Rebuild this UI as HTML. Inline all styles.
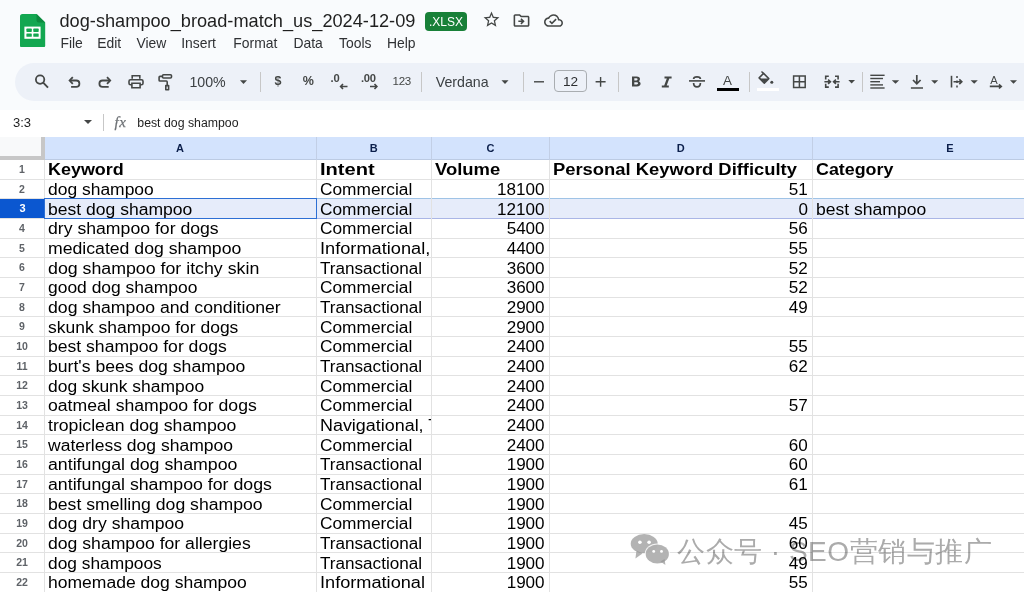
<!DOCTYPE html>
<html><head><meta charset="utf-8">
<style>
*{margin:0;padding:0;box-sizing:border-box}
html,body{width:1024px;height:592px;overflow:hidden;background:#f9fbfd;font-family:"Liberation Sans",sans-serif;position:relative}
.abs{position:absolute}
.title{position:absolute;left:59.5px;top:10.5px;font-size:18.2px;color:#1f1f1f;white-space:nowrap}
.badge{position:absolute;left:424.8px;top:12px;width:42.3px;height:19.3px;background:#188038;border-radius:4px;color:#fff;font-size:12px;line-height:20px;text-align:center}
.menu{position:absolute;top:35px;font-size:13.9px;color:#2f3134;white-space:nowrap}
.tb{position:absolute;left:15px;top:63.3px;width:1060px;height:37.5px;border-radius:19px;background:#edf1f8}
.ico{position:absolute;fill:#444746}
.sep{position:absolute;top:72px;width:1px;height:20px;background:#c7c7c7}
.tbt{position:absolute;font-size:14px;color:#444746;white-space:nowrap}
.dd{position:absolute;width:0;height:0;border-left:4px solid transparent;border-right:4px solid transparent;border-top:4px solid #444746}
.fbar{position:absolute;left:0;top:110px;width:1024px;height:27px;background:#fff}
.colhdr{position:absolute;left:44.5px;top:136.5px;width:1000px;height:23px;background:#d3e3fd;border-bottom:1px solid #bccbe3}
.ch{position:absolute;top:137px;height:22px;line-height:22px;font-size:11px;font-weight:bold;color:#0b1f4b;text-align:center}
.chl{position:absolute;top:136.5px;width:1px;height:23px;background:#c2cfe6}
.corner{position:absolute;left:0;top:136.5px;width:41px;height:19px;background:#f8f9fa}
.hthick{position:absolute;left:0;top:155.5px;width:45px;height:4.1px;background:#c7c7c7}
.vthick{position:absolute;left:41px;top:136.5px;width:3.8px;height:23.1px;background:#c7c7c7}
.grid{position:absolute;left:0;top:0;width:1024px;height:592px}
.gridbg{position:absolute;left:0;top:159.6px;width:1024px;height:440px;background:#fff}
.hl{position:absolute;left:0;width:1024px;height:1px;background:#e2e2e2}
.vl{position:absolute;top:159.6px;width:1px;height:440px;background:#e2e2e2}
.rhl{position:absolute;left:41px;top:159.6px;width:3px;height:440px;background:#c7c7c7}
.rh{position:absolute;left:1.5px;width:41px;text-align:center;font-size:10.5px;font-weight:bold;color:#5f6368}
.rh.sel{left:0;width:43.5px;padding-left:1.5px;background:#0b57d0;color:#fff;font-weight:bold;font-size:11px}
.selrow{position:absolute;left:44px;width:1000px;background:#e6ecfa;border-top:1px solid #9fc3e6;border-bottom:1px solid #aab6e6}
.cell{position:absolute;height:20px;line-height:20px;font-size:16px;color:#000;white-space:nowrap}
.cell span{display:inline-block;transform:scaleX(1.104);transform-origin:0 50%}
.cell.num span{transform-origin:100% 50%}
.cell.b span{font-weight:bold;transform:scaleX(1.145)}
.active{position:absolute;left:44.3px;top:198.3px;width:272.7px;height:20.5px;border:1.8px solid #2d6fd4}
.wm{position:absolute;left:677px;top:532.5px;font-size:28px;color:#ababab;white-space:nowrap;letter-spacing:0.5px;mix-blend-mode:multiply}
</style></head><body>
<!-- sheets logo -->
<svg class="abs" style="left:20.4px;top:13.7px" width="25.2" height="33.8" viewBox="0 0 25.2 33.8">
 <path d="M2.5 0 H16.6 L25.2 8.6 V31.3 Q25.2 33.8 22.7 33.8 H2.5 Q0 33.8 0 31.3 V2.5 Q0 0 2.5 0Z" fill="#13a751"/>
 <path d="M16.6 0 L25.2 8.6 H18.6 Q16.6 8.6 16.6 6.6Z" fill="#0c8a3f"/>
 <rect x="4.4" y="12.6" width="16.2" height="12.2" fill="#fff"/>
 <rect x="6.4" y="14.6" width="5.4" height="3.3" rx="0.6" fill="#13a751"/>
 <rect x="13.3" y="14.6" width="5.4" height="3.3" rx="0.6" fill="#13a751"/>
 <rect x="6.4" y="19.5" width="5.4" height="3.3" rx="0.6" fill="#13a751"/>
 <rect x="13.3" y="19.5" width="5.4" height="3.3" rx="0.6" fill="#13a751"/>
</svg>
<div class="title">dog-shampoo_broad-match_us_2024-12-09</div>
<div class="badge">.XLSX</div>
<!-- star -->
<svg class="ico" style="left:481.5px;top:10.3px" width="19" height="19" viewBox="0 0 24 24"><path d="M22 9.24l-7.19-.62L12 2 9.19 8.63 2 9.24l5.46 4.73L5.82 21 12 17.27 18.18 21l-1.63-7.03L22 9.24zM12 15.4l-3.76 2.27 1-4.28-3.32-2.88 4.38-.38L12 6.1l1.71 4.04 4.38.38-3.32 2.88 1 4.28L12 15.4z"/></svg>
<!-- folder move -->
<svg class="ico" style="left:511.8px;top:10.5px" width="19" height="19" viewBox="0 0 24 24"><path d="M20 6h-8l-2-2H4c-1.1 0-2 .9-2 2v12c0 1.1.9 2 2 2h16c1.1 0 2-.9 2-2V8c0-1.1-.9-2-2-2zm0 12H4V6h5.17l2 2H20v10zm-7.84-6H8v2h4.16l-1.59 1.59L11.99 17 16 13.01 11.99 9l-1.41 1.41L12.16 12z"/></svg>
<!-- cloud done -->
<svg class="ico" style="left:544.2px;top:10.5px" width="19" height="19" viewBox="0 0 24 24"><path d="M19.35 10.04C18.67 6.59 15.64 4 12 4 9.11 4 6.6 5.64 5.35 8.04 2.34 8.36 0 10.91 0 14c0 3.31 2.690 6 6 6h13c2.76 0 5-2.24 5-5 0-2.64-2.05-4.78-4.650-4.96zM19 18H6c-2.21 0-4-1.79-4-4 0-2.05 1.53-3.76 3.56-3.97l1.07-.11.5-.95C8.08 7.14 9.94 6 12 6c2.620 0 4.88 1.86 5.39 4.43l.3 1.5 1.53.11c1.56.1 2.78 1.41 2.78 2.96 0 1.65-1.35 3-3 3zm-9-3.82l-2.09-2.09L6.5 13.5 10 17l6.01-6.01-1.41-1.41z"/></svg>

<div class="menu" style="left:60.4px">File</div>
<div class="menu" style="left:97.3px">Edit</div>
<div class="menu" style="left:136.4px">View</div>
<div class="menu" style="left:181.2px">Insert</div>
<div class="menu" style="left:233.3px">Format</div>
<div class="menu" style="left:293.5px">Data</div>
<div class="menu" style="left:339px">Tools</div>
<div class="menu" style="left:387px">Help</div>

<!-- toolbar -->
<div class="tb"></div>
<div class="tbt" style="left:189.4px;top:74.2px;font-size:14.2px;color:#3c4043">100%</div>
<div class="sep" style="left:259.5px"></div>
<div class="tbt" style="left:274.5px;top:73.5px;font-size:12.5px;font-weight:bold">$</div>
<div class="tbt" style="left:302.8px;top:73.5px;font-size:12.5px;font-weight:bold">%</div>
<div class="tbt" style="left:330.5px;top:71.8px;font-size:11.2px;font-weight:bold;letter-spacing:-0.2px">.0</div>
<div class="tbt" style="left:361px;top:71.8px;font-size:11.2px;font-weight:bold;letter-spacing:-0.3px">.00</div>
<div class="tbt" style="left:392.5px;top:74px;font-size:11.6px;letter-spacing:-0.3px">123</div>
<div class="sep" style="left:421.0px"></div>
<div class="tbt" style="left:435.8px;top:74.2px;font-size:14.2px;color:#3c4043">Verdana</div>
<div class="sep" style="left:523.0px"></div>
<div class="abs" style="left:554px;top:69.9px;width:33px;height:22.6px;border:1px solid #a9adb1;border-radius:4px;font-size:13.6px;line-height:21px;text-align:center;color:#2d2f31">12</div>
<div class="sep" style="left:617.5px"></div>
<div class="tbt" style="left:723px;top:72.6px;font-size:13.4px">A</div>
<div class="abs" style="left:717.2px;top:87.6px;width:22.3px;height:3.5px;background:#000"></div>
<div class="sep" style="left:748.5px"></div>
<div class="abs" style="left:756.7px;top:87.9px;width:22.5px;height:2.7px;background:#fff"></div>
<div class="sep" style="left:861.5px"></div>
<div class="tbt" style="left:990.3px;top:74.3px;font-size:11.2px">A</div>
<svg class="abs" style="left:0;top:0" width="1024" height="592" viewBox="0 0 1024 592"><circle cx="40.1" cy="79.6" r="4.2" fill="none" stroke="#444746" stroke-width="1.8"/><path d="M43.2 82.7 L48 87.6" fill="none" stroke="#444746" stroke-width="1.9" /><path d="M72.8 77.1 L69.6 80.5 L72.8 83.9" fill="none" stroke="#444746" stroke-width="1.8" /><path d="M70 80.5 H76.2 A3.2 3.2 0 0 1 76.2 86.9 H71.1" fill="none" stroke="#444746" stroke-width="1.8" /><path d="M107 77.1 L110.2 80.5 L107 83.9" fill="none" stroke="#444746" stroke-width="1.8" /><path d="M109.8 80.5 H102.6 A3.2 3.2 0 0 0 102.6 86.9 H108.7" fill="none" stroke="#444746" stroke-width="1.8" /><path d="M132.2 78.8 V75.8 H139.8 V78.8" fill="none" stroke="#444746" stroke-width="1.6" /><path d="M132 84.8 H130.5 Q129 84.8 129 83.3 V81.3 Q129 79.8 130.5 79.8 H141.5 Q143 79.8 143 81.3 V83.3 Q143 84.8 141.5 84.8 H140" fill="none" stroke="#444746" stroke-width="1.6" /><path d="M131.9 83.2 H140.1 V87.7 H131.9Z" fill="none" stroke="#444746" stroke-width="1.6" /><path d="M163.5 74.8 H170.5 Q171.5 74.8 171.5 75.8 V77 Q171.5 78 170.5 78 H163.5 Q162.5 78 162.5 77 V75.8 Q162.5 74.8 163.5 74.8Z" fill="none" stroke="#444746" stroke-width="1.6" /><path d="M162.5 76.4 H160 Q159.1 76.4 159.1 77.3 V80.2 Q159.1 81 160 81 H166.3 Q167.2 81 167.2 81.9 V85.5" fill="none" stroke="#444746" stroke-width="1.6" /><path d="M165.8 85.6 H168.6 V89.8 H165.8Z" fill="none" stroke="#444746" stroke-width="1.6" stroke-linejoin="round"/><path d="M240 80.2 H247 L243.5 84Z" fill="#444746"/><path d="M347.5 86.5 H341 M343 84 L340.6 86.5 L343 89" fill="none" stroke="#444746" stroke-width="1.6" /><path d="M370 86.5 H376.5 M374.5 84 L376.9 86.5 L374.5 89" fill="none" stroke="#444746" stroke-width="1.6" /><path d="M501.5 80.2 H508.5 L505.0 84Z" fill="#444746"/><path d="M534 81.8 H544" fill="none" stroke="#444746" stroke-width="1.4" /><path d="M595.6 81.8 H605.6 M600.6 76.9 V86.7" fill="none" stroke="#444746" stroke-width="1.4" /><path d="M632 76.4 H636.6 Q640 76.4 640 79.1 Q640 80.6 638.8 81.2 Q640.6 81.9 640.6 83.6 Q640.6 86.4 637 86.4 H632Z M634.3 78.3 V80.4 H636.4 Q637.6 80.4 637.6 79.35 Q637.6 78.3 636.4 78.3Z M634.3 82.2 V84.5 H636.7 Q638.1 84.5 638.1 83.35 Q638.1 82.2 636.7 82.2Z" fill="#444746"/><path d="M664.5 76.4 H671.6 V78.4 H669.3 L666.7 85.6 H668.8 V87.6 H661.8 V85.6 H664.2 L666.8 78.4 H664.5Z" fill="#444746"/><path d="M689 80.9 H705" fill="none" stroke="#444746" stroke-width="1.6" /><path d="M693.6 79 Q693.6 76.8 697 76.8 Q700.4 76.8 700.4 79" fill="none" stroke="#444746" stroke-width="1.7" /><path d="M693.6 83 Q693.6 86.9 697 86.9 Q700.4 86.9 700.4 83" fill="none" stroke="#444746" stroke-width="1.7" /><path d="M761.5 71.5 L763.8 73.8" fill="none" stroke="#444746" stroke-width="1.5" /><path d="M763.6 73.4 L768.8 78.6 L764.3 83.1 L759.1 77.9Z" fill="none" stroke="#444746" stroke-width="1.5" stroke-linejoin="round"/><path d="M759.6 78.4 H768.3 L764.3 82.4Z" fill="#444746"/><circle cx="771.8" cy="82.2" r="1.5" fill="#444746"/><path d="M793.6 75.9 H805.2 V87.5 H793.6Z M799.4 75.9 V87.5 M793.6 81.7 H805.2" fill="none" stroke="#444746" stroke-width="1.5" /><path d="M828.8 76.3 H825.7 V79.6 M825.7 83.8 V87.1 H828.8 M835 76.3 H838.1 V79.6 M838.1 83.8 V87.1 H835" fill="none" stroke="#444746" stroke-width="1.6" /><path d="M824.4 81.7 H830 M828.1 79.6 L830.4 81.7 L828.1 83.8" fill="none" stroke="#444746" stroke-width="1.6" /><path d="M839.6 81.7 H834 M835.9 79.6 L833.6 81.7 L835.9 83.8" fill="none" stroke="#444746" stroke-width="1.6" /><path d="M848.3 80.1 H855 L851.65 83.4Z" fill="#444746"/><path d="M870.3 75.3 H884.6" fill="none" stroke="#444746" stroke-width="1.4" /><path d="M870.3 78.5 H883" fill="none" stroke="#444746" stroke-width="1.4" /><path d="M870.3 81.7 H880" fill="none" stroke="#444746" stroke-width="1.4" /><path d="M870.3 84.9 H883" fill="none" stroke="#444746" stroke-width="1.4" /><path d="M870.3 88 H884.6" fill="none" stroke="#444746" stroke-width="1.4" /><path d="M891.8 80.3 H899.2 L895.5 83.8Z" fill="#444746"/><path d="M916.8 75 V83.2 M913 80 L916.8 83.8 L920.6 80" fill="none" stroke="#444746" stroke-width="1.7" /><path d="M910.9 88 H923" fill="none" stroke="#444746" stroke-width="1.5" /><path d="M931.2 80.3 H938.2 L934.7 83.8Z" fill="#444746"/><path d="M951.5 75.8 V87.5" fill="none" stroke="#444746" stroke-width="1.6" /><path d="M957 76 V78 M957 80.6 V83 M957 85.4 V87.4" fill="none" stroke="#444746" stroke-width="1.5" /><path d="M953.5 81.75 H961.5 M959.3 79.4 L961.8 81.75 L959.3 84.1" fill="none" stroke="#444746" stroke-width="1.6" /><path d="M970.6 80.3 H977.8 L974.2 83.8Z" fill="#444746"/><path d="M989.8 86.4 H1001 M999 84.3 L1001.3 86.4 L999 88.5" fill="none" stroke="#444746" stroke-width="1.6" /><path d="M1010 80.3 H1017 L1013.5 83.8Z" fill="#444746"/></svg>

<!-- formula bar -->
<div class="fbar"></div>
<div class="abs" style="left:13px;top:115px;font-size:13px;color:#1f1f1f">3:3</div>
<div class="dd" style="left:83.5px;top:120px"></div>
<div class="abs" style="left:103px;top:114px;width:1px;height:17px;background:#c7c7c7"></div>
<div class="abs" style="left:114.5px;top:113.5px;font-size:15px;font-style:italic;font-family:'Liberation Serif',serif;color:#6d7175;letter-spacing:0.6px;-webkit-text-stroke:0.25px #6d7175">fx</div>
<div class="abs" style="left:137.3px;top:115.8px;font-size:12.3px;color:#1f1f1f">best dog shampoo</div>

<!-- column header -->
<div class="corner"></div>
<div class="colhdr"></div>
<div class="ch" style="left:44px;width:272px">A</div>
<div class="ch" style="left:316px;width:115.5px">B</div>
<div class="ch" style="left:431.5px;width:118px">C</div>
<div class="ch" style="left:549.5px;width:262.5px">D</div>
<div class="ch" style="left:812px;width:276px">E</div>
<div class="chl" style="left:315.5px"></div>
<div class="chl" style="left:431px"></div>
<div class="chl" style="left:549px"></div>
<div class="chl" style="left:811.5px"></div>
<div class="hthick"></div>
<div class="vthick"></div>

<div class="gridbg"></div>
<div class="vl" style="left:43.5px"></div>
<div class="hl" style="top:178.70px"></div>
<div class="hl" style="top:198.37px"></div>
<div class="hl" style="top:218.04px"></div>
<div class="hl" style="top:237.71px"></div>
<div class="hl" style="top:257.38px"></div>
<div class="hl" style="top:277.05px"></div>
<div class="hl" style="top:296.72px"></div>
<div class="hl" style="top:316.39px"></div>
<div class="hl" style="top:336.06px"></div>
<div class="hl" style="top:355.73px"></div>
<div class="hl" style="top:375.40px"></div>
<div class="hl" style="top:395.07px"></div>
<div class="hl" style="top:414.74px"></div>
<div class="hl" style="top:434.41px"></div>
<div class="hl" style="top:454.08px"></div>
<div class="hl" style="top:473.75px"></div>
<div class="hl" style="top:493.42px"></div>
<div class="hl" style="top:513.09px"></div>
<div class="hl" style="top:532.76px"></div>
<div class="hl" style="top:552.43px"></div>
<div class="hl" style="top:572.10px"></div>
<div class="hl" style="top:591.77px"></div>
<div class="selrow" style="top:198.37px;height:20.67px"></div>
<div class="vl" style="left:315.50px"></div>
<div class="vl" style="left:431.00px"></div>
<div class="vl" style="left:549.00px"></div>
<div class="vl" style="left:811.50px"></div>
<div class="rh" style="top:159.90px;height:18.80px;line-height:18.80px">1</div>
<div class="rh" style="top:179.70px;height:18.67px;line-height:18.67px">2</div>
<div class="rh sel" style="top:199.47px;height:18.47px;line-height:18.47px">3</div>
<div class="rh" style="top:219.04px;height:18.67px;line-height:18.67px">4</div>
<div class="rh" style="top:238.71px;height:18.67px;line-height:18.67px">5</div>
<div class="rh" style="top:258.38px;height:18.67px;line-height:18.67px">6</div>
<div class="rh" style="top:278.05px;height:18.67px;line-height:18.67px">7</div>
<div class="rh" style="top:297.72px;height:18.67px;line-height:18.67px">8</div>
<div class="rh" style="top:317.39px;height:18.67px;line-height:18.67px">9</div>
<div class="rh" style="top:337.06px;height:18.67px;line-height:18.67px">10</div>
<div class="rh" style="top:356.73px;height:18.67px;line-height:18.67px">11</div>
<div class="rh" style="top:376.40px;height:18.67px;line-height:18.67px">12</div>
<div class="rh" style="top:396.07px;height:18.67px;line-height:18.67px">13</div>
<div class="rh" style="top:415.74px;height:18.67px;line-height:18.67px">14</div>
<div class="rh" style="top:435.41px;height:18.67px;line-height:18.67px">15</div>
<div class="rh" style="top:455.08px;height:18.67px;line-height:18.67px">16</div>
<div class="rh" style="top:474.75px;height:18.67px;line-height:18.67px">17</div>
<div class="rh" style="top:494.42px;height:18.67px;line-height:18.67px">18</div>
<div class="rh" style="top:514.09px;height:18.67px;line-height:18.67px">19</div>
<div class="rh" style="top:533.76px;height:18.67px;line-height:18.67px">20</div>
<div class="rh" style="top:553.43px;height:18.67px;line-height:18.67px">21</div>
<div class="rh" style="top:573.10px;height:18.67px;line-height:18.67px">22</div>
<div class="cell b" style="top:160.00px;left:47.60px"><span style="transform:scaleX(1.121)">Keyword</span></div>
<div class="cell b" style="top:160.00px;left:319.60px;width:111.40px;overflow:hidden"><span style="transform:scaleX(1.257)">Intent</span></div>
<div class="cell b" style="top:160.00px;left:435.10px"><span style="transform:scaleX(1.151)">Volume</span></div>
<div class="cell b" style="top:160.00px;left:553.10px"><span style="transform:scaleX(1.148)">Personal Keyword Difficulty</span></div>
<div class="cell b" style="top:160.00px;left:815.60px"><span style="transform:scaleX(1.116)">Category</span></div>
<div class="cell" style="top:180.07px;left:47.60px"><span style="transform:scaleX(1.091)">dog shampoo</span></div>
<div class="cell" style="top:180.07px;left:319.60px;width:111.40px;overflow:hidden"><span style="transform:scaleX(1.081)">Commercial</span></div>
<div class="cell num" style="top:180.07px;right:479.10px"><span style="transform:scaleX(1.066)">18100</span></div>
<div class="cell num" style="top:180.07px;right:216.60px"><span style="transform:scaleX(1.066)">51</span></div>
<div class="cell" style="top:199.74px;left:47.60px"><span style="transform:scaleX(1.096)">best dog shampoo</span></div>
<div class="cell" style="top:199.74px;left:319.60px;width:111.40px;overflow:hidden"><span style="transform:scaleX(1.081)">Commercial</span></div>
<div class="cell num" style="top:199.74px;right:479.10px"><span style="transform:scaleX(1.066)">12100</span></div>
<div class="cell num" style="top:199.74px;right:216.60px"><span style="transform:scaleX(1.066)">0</span></div>
<div class="cell" style="top:199.74px;left:815.60px"><span style="transform:scaleX(1.096)">best shampoo</span></div>
<div class="cell" style="top:219.41px;left:47.60px"><span style="transform:scaleX(1.103)">dry shampoo for dogs</span></div>
<div class="cell" style="top:219.41px;left:319.60px;width:111.40px;overflow:hidden"><span style="transform:scaleX(1.081)">Commercial</span></div>
<div class="cell num" style="top:219.41px;right:479.10px"><span style="transform:scaleX(1.066)">5400</span></div>
<div class="cell num" style="top:219.41px;right:216.60px"><span style="transform:scaleX(1.066)">56</span></div>
<div class="cell" style="top:239.08px;left:47.60px"><span style="transform:scaleX(1.103)">medicated dog shampoo</span></div>
<div class="cell" style="top:239.08px;left:319.60px;width:111.40px;overflow:hidden"><span style="transform:scaleX(1.138)">Informational,</span></div>
<div class="cell num" style="top:239.08px;right:479.10px"><span style="transform:scaleX(1.066)">4400</span></div>
<div class="cell num" style="top:239.08px;right:216.60px"><span style="transform:scaleX(1.066)">55</span></div>
<div class="cell" style="top:258.75px;left:47.60px"><span style="transform:scaleX(1.110)">dog shampoo for itchy skin</span></div>
<div class="cell" style="top:258.75px;left:319.60px;width:111.40px;overflow:hidden"><span style="transform:scaleX(1.069)">Transactional</span></div>
<div class="cell num" style="top:258.75px;right:479.10px"><span style="transform:scaleX(1.066)">3600</span></div>
<div class="cell num" style="top:258.75px;right:216.60px"><span style="transform:scaleX(1.066)">52</span></div>
<div class="cell" style="top:278.42px;left:47.60px"><span style="transform:scaleX(1.090)">good dog shampoo</span></div>
<div class="cell" style="top:278.42px;left:319.60px;width:111.40px;overflow:hidden"><span style="transform:scaleX(1.081)">Commercial</span></div>
<div class="cell num" style="top:278.42px;right:479.10px"><span style="transform:scaleX(1.066)">3600</span></div>
<div class="cell num" style="top:278.42px;right:216.60px"><span style="transform:scaleX(1.066)">52</span></div>
<div class="cell" style="top:298.09px;left:47.60px"><span style="transform:scaleX(1.104)">dog shampoo and conditioner</span></div>
<div class="cell" style="top:298.09px;left:319.60px;width:111.40px;overflow:hidden"><span style="transform:scaleX(1.069)">Transactional</span></div>
<div class="cell num" style="top:298.09px;right:479.10px"><span style="transform:scaleX(1.066)">2900</span></div>
<div class="cell num" style="top:298.09px;right:216.60px"><span style="transform:scaleX(1.066)">49</span></div>
<div class="cell" style="top:317.76px;left:47.60px"><span style="transform:scaleX(1.092)">skunk shampoo for dogs</span></div>
<div class="cell" style="top:317.76px;left:319.60px;width:111.40px;overflow:hidden"><span style="transform:scaleX(1.081)">Commercial</span></div>
<div class="cell num" style="top:317.76px;right:479.10px"><span style="transform:scaleX(1.066)">2900</span></div>
<div class="cell" style="top:337.43px;left:47.60px"><span style="transform:scaleX(1.098)">best shampoo for dogs</span></div>
<div class="cell" style="top:337.43px;left:319.60px;width:111.40px;overflow:hidden"><span style="transform:scaleX(1.081)">Commercial</span></div>
<div class="cell num" style="top:337.43px;right:479.10px"><span style="transform:scaleX(1.066)">2400</span></div>
<div class="cell num" style="top:337.43px;right:216.60px"><span style="transform:scaleX(1.066)">55</span></div>
<div class="cell" style="top:357.10px;left:47.60px"><span style="transform:scaleX(1.101)">burt's bees dog shampoo</span></div>
<div class="cell" style="top:357.10px;left:319.60px;width:111.40px;overflow:hidden"><span style="transform:scaleX(1.069)">Transactional</span></div>
<div class="cell num" style="top:357.10px;right:479.10px"><span style="transform:scaleX(1.066)">2400</span></div>
<div class="cell num" style="top:357.10px;right:216.60px"><span style="transform:scaleX(1.066)">62</span></div>
<div class="cell" style="top:376.77px;left:47.60px"><span style="transform:scaleX(1.090)">dog skunk shampoo</span></div>
<div class="cell" style="top:376.77px;left:319.60px;width:111.40px;overflow:hidden"><span style="transform:scaleX(1.081)">Commercial</span></div>
<div class="cell num" style="top:376.77px;right:479.10px"><span style="transform:scaleX(1.066)">2400</span></div>
<div class="cell" style="top:396.44px;left:47.60px"><span style="transform:scaleX(1.102)">oatmeal shampoo for dogs</span></div>
<div class="cell" style="top:396.44px;left:319.60px;width:111.40px;overflow:hidden"><span style="transform:scaleX(1.081)">Commercial</span></div>
<div class="cell num" style="top:396.44px;right:479.10px"><span style="transform:scaleX(1.066)">2400</span></div>
<div class="cell num" style="top:396.44px;right:216.60px"><span style="transform:scaleX(1.066)">57</span></div>
<div class="cell" style="top:416.11px;left:47.60px"><span style="transform:scaleX(1.103)">tropiclean dog shampoo</span></div>
<div class="cell" style="top:416.11px;left:319.60px;width:111.40px;overflow:hidden"><span style="transform:scaleX(1.120)">Navigational, T</span></div>
<div class="cell num" style="top:416.11px;right:479.10px"><span style="transform:scaleX(1.066)">2400</span></div>
<div class="cell" style="top:435.78px;left:47.60px"><span style="transform:scaleX(1.095)">waterless dog shampoo</span></div>
<div class="cell" style="top:435.78px;left:319.60px;width:111.40px;overflow:hidden"><span style="transform:scaleX(1.081)">Commercial</span></div>
<div class="cell num" style="top:435.78px;right:479.10px"><span style="transform:scaleX(1.066)">2400</span></div>
<div class="cell num" style="top:435.78px;right:216.60px"><span style="transform:scaleX(1.066)">60</span></div>
<div class="cell" style="top:455.45px;left:47.60px"><span style="transform:scaleX(1.109)">antifungal dog shampoo</span></div>
<div class="cell" style="top:455.45px;left:319.60px;width:111.40px;overflow:hidden"><span style="transform:scaleX(1.069)">Transactional</span></div>
<div class="cell num" style="top:455.45px;right:479.10px"><span style="transform:scaleX(1.066)">1900</span></div>
<div class="cell num" style="top:455.45px;right:216.60px"><span style="transform:scaleX(1.066)">60</span></div>
<div class="cell" style="top:475.12px;left:47.60px"><span style="transform:scaleX(1.109)">antifungal shampoo for dogs</span></div>
<div class="cell" style="top:475.12px;left:319.60px;width:111.40px;overflow:hidden"><span style="transform:scaleX(1.069)">Transactional</span></div>
<div class="cell num" style="top:475.12px;right:479.10px"><span style="transform:scaleX(1.066)">1900</span></div>
<div class="cell num" style="top:475.12px;right:216.60px"><span style="transform:scaleX(1.066)">61</span></div>
<div class="cell" style="top:494.79px;left:47.60px"><span style="transform:scaleX(1.102)">best smelling dog shampoo</span></div>
<div class="cell" style="top:494.79px;left:319.60px;width:111.40px;overflow:hidden"><span style="transform:scaleX(1.081)">Commercial</span></div>
<div class="cell num" style="top:494.79px;right:479.10px"><span style="transform:scaleX(1.066)">1900</span></div>
<div class="cell" style="top:514.46px;left:47.60px"><span style="transform:scaleX(1.101)">dog dry shampoo</span></div>
<div class="cell" style="top:514.46px;left:319.60px;width:111.40px;overflow:hidden"><span style="transform:scaleX(1.081)">Commercial</span></div>
<div class="cell num" style="top:514.46px;right:479.10px"><span style="transform:scaleX(1.066)">1900</span></div>
<div class="cell num" style="top:514.46px;right:216.60px"><span style="transform:scaleX(1.066)">45</span></div>
<div class="cell" style="top:534.13px;left:47.60px"><span style="transform:scaleX(1.101)">dog shampoo for allergies</span></div>
<div class="cell" style="top:534.13px;left:319.60px;width:111.40px;overflow:hidden"><span style="transform:scaleX(1.069)">Transactional</span></div>
<div class="cell num" style="top:534.13px;right:479.10px"><span style="transform:scaleX(1.066)">1900</span></div>
<div class="cell num" style="top:534.13px;right:216.60px"><span style="transform:scaleX(1.066)">60</span></div>
<div class="cell" style="top:553.80px;left:47.60px"><span style="transform:scaleX(1.084)">dog shampoos</span></div>
<div class="cell" style="top:553.80px;left:319.60px;width:111.40px;overflow:hidden"><span style="transform:scaleX(1.069)">Transactional</span></div>
<div class="cell num" style="top:553.80px;right:479.10px"><span style="transform:scaleX(1.066)">1900</span></div>
<div class="cell num" style="top:553.80px;right:216.60px"><span style="transform:scaleX(1.066)">49</span></div>
<div class="cell" style="top:573.47px;left:47.60px"><span style="transform:scaleX(1.096)">homemade dog shampoo</span></div>
<div class="cell" style="top:573.47px;left:319.60px;width:111.40px;overflow:hidden"><span style="transform:scaleX(1.135)">Informational</span></div>
<div class="cell num" style="top:573.47px;right:479.10px"><span style="transform:scaleX(1.066)">1900</span></div>
<div class="cell num" style="top:573.47px;right:216.60px"><span style="transform:scaleX(1.066)">55</span></div>
<div class="active"></div>

<!-- watermark -->
<svg class="abs" style="left:625px;top:528px" width="50" height="42" viewBox="0 0 50 42">
 <g fill="rgba(150,150,150,0.72)">
 <ellipse cx="19.2" cy="15.7" rx="13.5" ry="9.6"/>
 <path d="M11.5 22.5 L10.4 30.5 L17.5 25.5Z"/>
 </g>
 <ellipse cx="32.3" cy="26" rx="12.6" ry="10.5" fill="#fff" fill-opacity="0.85"/>
 <g fill="rgba(150,150,150,0.72)">
 <ellipse cx="32.3" cy="26" rx="11.6" ry="9.6"/>
 <path d="M35.5 33.5 L40.4 37 L39.6 31Z"/>
 </g>
 <circle cx="14.9" cy="14.2" r="1.8" fill="#fff"/><circle cx="24.1" cy="14.2" r="1.8" fill="#fff"/>
 <circle cx="28.7" cy="23.4" r="1.4" fill="#fff"/><circle cx="36.5" cy="23.4" r="1.4" fill="#fff"/>
</svg>
<div class="wm">公众号 · SEO营销与推广</div>
</body></html>
